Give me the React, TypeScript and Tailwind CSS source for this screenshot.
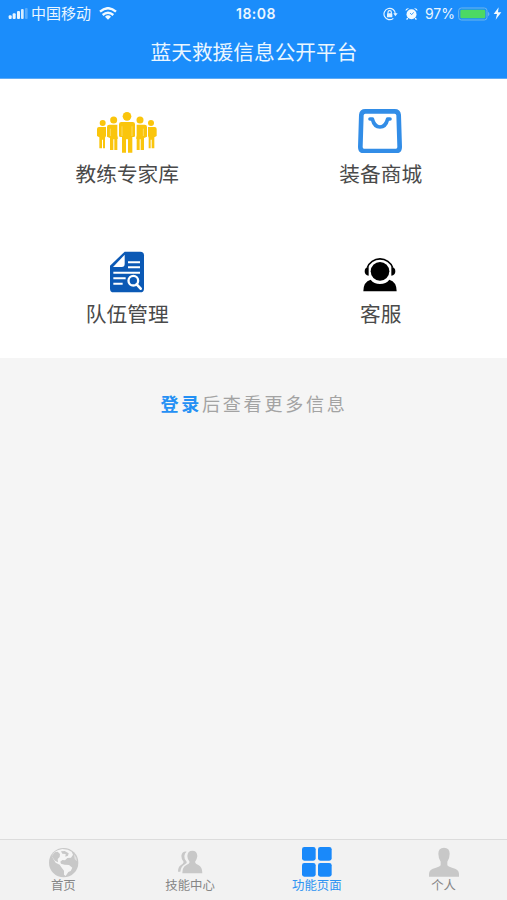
import type { ReactNode } from 'react'

function SignalIcon() {
  return (
    <svg width="20" height="12" viewBox="0 0 60 36" fill="#eaf6ff">
      <rect x="2" y="22" width="9" height="11" rx="3" />
      <rect x="14" y="16" width="9" height="17" rx="3" />
      <rect x="27" y="9" width="9" height="24" rx="3" />
      <rect x="39" y="3" width="8" height="30" rx="3" opacity="0.9" />
      <rect x="51" y="0" width="8" height="33" rx="3" opacity="0.3" />
    </svg>
  )
}

function WifiIcon() {
  return (
    <svg width="18" height="13" viewBox="0 0 54 39" fill="none" stroke="#f2faff" strokeWidth="7">
      <path d="M3 14 Q27 -7 51 14" />
      <path d="M11 24 Q27 10 43 24" />
      <path d="M27 38 L18 29 Q27 21 36 29 Z" fill="#f2faff" stroke="none" />
    </svg>
  )
}

function LockIcon() {
  return (
    <svg width="15" height="14" viewBox="0 0 45 42" fill="none" stroke="#e6f4ff" strokeWidth="3.5">
      <path d="M31 34 A17 17 0 1 1 37 21" />
      <path d="M31 19 H44 L37 28 Z" fill="#e6f4ff" stroke="none" />
      <path d="M15 20 V16 a5 5 0 0 1 10 0 V20" />
      <rect x="12" y="19" width="16" height="12" rx="2" fill="#e6f4ff" stroke="none" />
    </svg>
  )
}

function AlarmIcon() {
  return (
    <svg width="13" height="14" viewBox="0 0 39 42" fill="#f2faff">
      <circle cx="19.500" cy="22" r="15" />
      <path d="M2 12 Q1 3 12 4 Z M37 12 Q38 3 27 4 Z" />
      <path d="M8 33 L5 38 M31 33 L34 38" stroke="#f2faff" strokeWidth="4" />
      <path d="M15 18 L20 23 L26 16" fill="none" stroke="#1b8dfb" strokeWidth="2.5" />
    </svg>
  )
}

function BatteryIcon() {
  return (
    <svg width="33" height="14" viewBox="0 0 99 42">
      <rect x="2" y="3" width="85" height="36" rx="8" fill="none" stroke="#6db6ea" strokeWidth="3" />
      <rect x="7" y="8" width="75" height="26" rx="4" fill="#4cd964" />
      <path d="M91 14 Q97 21 91 28 Z" fill="#8dc6e6" />
    </svg>
  )
}

function BoltIcon() {
  return (
    <svg width="9" height="13" viewBox="0 0 27 39" fill="#f2faff">
      <path d="M17 1 L2 21 H12 L8 38 L25 16 H15 Z" />
    </svg>
  )
}

function TeamIcon() {
  return (
    <svg width="62" height="44" viewBox="94 27 186 132" fill="#fac50c">
      <circle cx="187" cy="49" r="13" />
      <path d="M170 66 H204 Q211 66 211 73 V107 Q211 111 207 111 H203 V158 H190 V118 H184 V158 H172 V111 H168 Q163 111 163 107 V73 Q163 66 170 66 Z" />
      <circle cx="147" cy="60" r="10.500" />
      <path d="M134 74 H158 V106 L160 116 H158 V150 H149 V118 H146 V150 H136 V114 L127 110 V81 Q127 74 134 74 Z" />
      <circle cx="226" cy="60" r="10.500" />
      <path d="M240 74 H216 V106 L214 116 H216 V150 H225 V118 H228 V150 H238 V114 L247 110 V81 Q247 74 240 74 Z" />
      <circle cx="114" cy="69" r="9" />
      <path d="M103 81 H124 V108 L121 113 V145 H115 V119 H112 V145 H104 V112 L97 108 V87 Q97 81 103 81 Z" />
      <circle cx="259" cy="69" r="9" />
      <path d="M270 81 H250 V108 L252 113 V145 H258 V119 H261 V145 H269 V112 L276 108 V87 Q276 81 270 81 Z" />
      <path d="M172 79 V108 M202 79 V108 M137 86 V108 M236 86 V108" stroke="#fde58c" strokeWidth="2" />
    </svg>
  )
}

function BagIcon() {
  return (
    <svg width="44" height="45" viewBox="86 23 132 135" fill="none" stroke="#328de7" strokeLinecap="round">
      <path d="M108 33 H196 Q207 33 208 44 L211 140 Q211 152 200 152 H104 Q93 152 93 140 L96 44 Q97 33 108 33 Z" strokeWidth="14" />
      <path d="M122 56 H129 Q135 80 152 80 Q169 80 175 56 H182" strokeWidth="11" strokeLinejoin="round" />
    </svg>
  )
}

function FileSearchIcon() {
  return (
    <svg width="36" height="42" viewBox="104 31 108 126">
      <path d="M151 33 H198 Q209 33 209 44 V144 Q209 155 198 155 H118 Q107 155 107 144 V75 Z" fill="#0b59b5" />
      <path d="M151 42 V70 Q151 79 142 79 H116 Z" fill="#fff" />
      <g stroke="#fff" strokeWidth="6">
        <path d="M161 65 H197 M161 80 H197 M117 96 H197 M117 113 H154 M117 129 H145" />
      </g>
      <circle cx="177" cy="120" r="14.500" fill="#0b59b5" stroke="#fff" strokeWidth="7" />
      <path d="M187 131 L199 144" stroke="#fff" strokeWidth="8" strokeLinecap="round" />
    </svg>
  )
}

function SupportIcon() {
  return (
    <svg width="36" height="36" viewBox="68 48 108 108">
      <circle cx="122" cy="91" r="28" />
      <path d="M84 80 A40 38 0 0 1 160 80" fill="none" stroke="#000" strokeWidth="5" />
      <path d="M88 79 V104 Q76 103 76 91 Q76 79 88 79 Z M156 79 V104 Q168 103 168 91 Q168 79 156 79 Z" />
      <path d="M72 151 Q72 122 94 116 Q104 129 122 129 Q140 129 150 116 Q172 122 172 151 Z" />
    </svg>
  )
}

function GlobeIcon() {
  return (
    <svg width="31" height="31" viewBox="55 47 93 93">
      <circle cx="102" cy="94" r="44" fill="#c8c8c8" />
      <path
        d="M84 57 L98 53 L114 55 L126 61 L130 70 L124 79 L113 80 L106 87 L98 86 L92 91 L94 97 L105 100 L118 101 L128 109 L123 119 L116 122 L108 134 L103 130 L103 118 L95 108 L90 100 L78 94 L71 83 L66 74 L74 63 Z"
        fill="#f5f5f5"
      />
      <path d="M66 75 L75 63 L84 61 L91 68 L90 77 L84 83 L85 93 L76 88 Z" fill="#c8c8c8" />
      <path d="M94 60 L105 59 L117 66 L115 73 L107 76 L108 68 L98 67 Z" fill="#c8c8c8" />
      <path d="M133 69 L140 79 L142 90 L135 84 Z" fill="#e2e2e2" />
    </svg>
  )
}

function SkillIcon() {
  return (
    <svg width="26" height="26" viewBox="443 56 78 78" fill="#c8c8c8">
      <path d="M489 61 Q503 61 504 77 Q503 87 497 95 Q498 101 507 104 Q519 109 519 129 H459 Q459 109 471 104 Q480 101 481 95 Q474 87 474 77 Q475 61 489 61 Z" />
      <path
        d="M472 64 Q459 62 456 76 Q456 88 463 95 Q462 101 454 105 Q446 110 446 124 H453 Q455 108 467 102 Q474 98 472 94 Q464 86 465 77 Q466 68 472 64 Z"
      />
    </svg>
  )
}

function GridIcon() {
  return (
    <svg width="30" height="30" viewBox="0 0 90 90" fill="#1989fa">
      <rect x="0" y="0" width="41" height="41" rx="7" />
      <rect x="48" y="0" width="41" height="41" rx="7" />
      <rect x="0" y="48" width="41" height="41" rx="7" />
      <rect x="48" y="48" width="41" height="41" rx="7" />
    </svg>
  )
}

function UserIcon() {
  return (
    <svg width="32" height="30" viewBox="444 49 96 90" fill="#c8c8c8">
      <path d="M492 51 Q509 51 509 69 Q509 83 502 93 V104 Q504 108 516 111 Q537 115 537 129 V138 H447 V129 Q447 115 468 111 Q480 108 482 104 V93 Q475 83 475 69 Q475 51 492 51 Z" />
    </svg>
  )
}

const features: { label: string; icon: ReactNode }[] = [
  { label: '教练专家库', icon: <TeamIcon /> },
  { label: '装备商城', icon: <BagIcon /> },
  { label: '队伍管理', icon: <FileSearchIcon /> },
  { label: '客服', icon: <SupportIcon /> },
]

const tabs: { label: string; icon: ReactNode; active?: boolean }[] = [
  { label: '首页', icon: <GlobeIcon /> },
  { label: '技能中心', icon: <SkillIcon /> },
  { label: '功能页面', icon: <GridIcon />, active: true },
  { label: '个人', icon: <UserIcon /> },
]

export default function App() {
  return (
    <div className="flex h-[900px] w-[507px] flex-col overflow-hidden bg-[#f5f5f5] font-['Inter','Noto_Sans_CJK_SC',sans-serif]">
      <header className="h-[79px] shrink-0 border-b border-[#5fabf5] bg-[#1b8dfb] text-[#eaf6ff]">
        {/* Status bar */}
        <div className="grid h-[27px] grid-cols-3 items-center pr-[5px] pl-2 leading-none">
          <div className="flex items-center">
            <SignalIcon />
            <span className="ml-[3px] text-[15px] whitespace-nowrap">中国移动</span>
            <span className="ml-2"><WifiIcon /></span>
          </div>
          <span className="pl-0.5 text-center text-[14px] font-semibold tracking-[0.5px]">18:08</span>
          <div className="flex items-center justify-end">
            <LockIcon />
            <span className="ml-[7px]"><AlarmIcon /></span>
            <span className="ml-[7px] text-[14px]">97%</span>
            <span className="ml-[3px]"><BatteryIcon /></span>
            <span className="ml-[2px]"><BoltIcon /></span>
          </div>
        </div>
        <h1 className="pt-px pl-px text-center text-[20.7px] leading-[50px]">蓝天救援信息公开平台</h1>
      </header>

      {/* Feature entries */}
      <section className="grid h-[279px] shrink-0 grid-cols-2 grid-rows-2 bg-white">
        {features.map((f) => (
          <div key={f.label} className="flex flex-col items-center pt-[30px]">
            <div className="flex h-[46px] items-end justify-center pb-[2px]">{f.icon}</div>
            <span className="mt-[5px] pl-px text-[20.7px] leading-[30px] text-[#4a4a4a]">{f.label}</span>
          </div>
        ))}
      </section>

      <p className="mt-8 pl-px text-center text-[18px] leading-[30px] tracking-[2.8px] text-[#a3a3a3]">
        <a className="font-bold text-[#2490f4]">登录</a>后查看更多信息
      </p>

      {/* Tab bar */}
      <nav className="mt-auto grid h-[61px] shrink-0 grid-cols-4 border-t border-[#dcdcdc] bg-[#f2f2f2]">
        {tabs.map((tab) => (
          <div key={tab.label} className="flex flex-col items-center pt-[6px]">
            <div className="flex h-[32px] items-center">{tab.icon}</div>
            <span className={tab.active ? 'mt-px text-[12.4px] leading-[14px] text-[#2d93f2]' : 'mt-px text-[12.4px] leading-[14px] text-[#868686]'}>
              {tab.label}
            </span>
          </div>
        ))}
      </nav>
    </div>
  )
}
